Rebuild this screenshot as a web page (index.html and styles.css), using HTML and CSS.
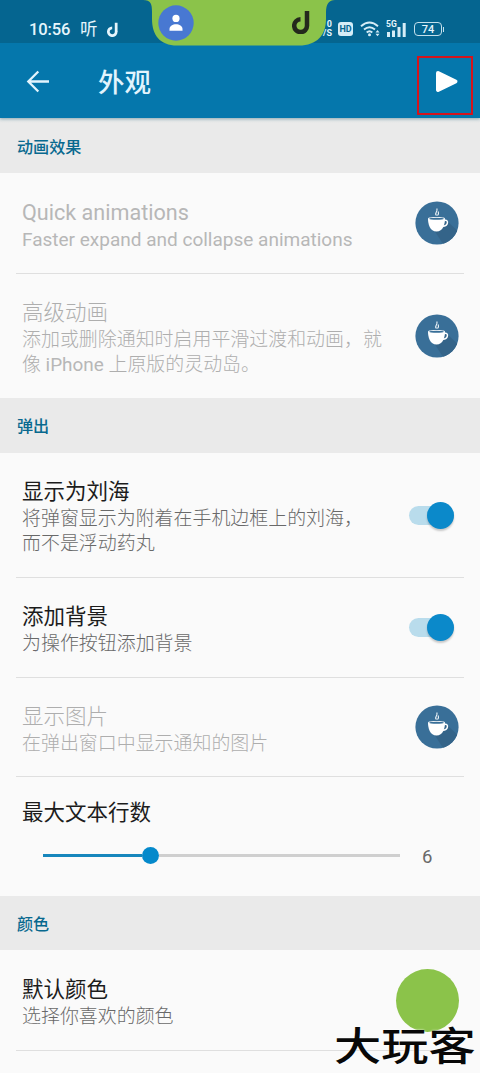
FILE: index.html
```html
<!DOCTYPE html>
<html lang="zh-CN">
<head>
<meta charset="utf-8">
<title>外观</title>
<link rel="stylesheet" href="styles.css">
</head>
<body>
<svg class="defs" width="0" height="0">
  <defs>
    <clipPath id="disc"><circle cx="22" cy="22" r="21.6"/></clipPath>
    <symbol id="coffee" viewBox="0 0 44 44">
      <circle cx="22" cy="22" r="21.6" fill="#396f98"/>
      <path clip-path="url(#disc)" d="M31 19 46 33 44 46 30 46 19 29Z" fill="#346489"/>
      <path d="M13 17.500C13 15.500 30 15.500 30 17.500C30 23.500 28 30.500 21.500 30.500S13 23.500 13 17.500Z" fill="#fff"/>
      <ellipse cx="21.500" cy="17.700" rx="7.300" ry="1" fill="#396f98"/>
      <path d="M29.300 19.500C34 18 33.500 25.300 27.500 25.200" fill="none" stroke="#fff" stroke-width="1.500"/>
      <path d="M21.500 14.500C18.500 12 23.500 11 21.800 7.500M22.500 14.500C24.500 12.800 23.500 12 23 10.500" fill="none" stroke="#f0f6fa" stroke-width="1.100"/>
    </symbol>
    <symbol id="note" viewBox="0 0 18 24">
      <path d="M15 1V15.500A6.400 6.400 0 1 1 8.500 9.300" fill="none" stroke="currentColor" stroke-width="4.500"/>
    </symbol>
  </defs>
</svg>
<div class="screen">
  <header class="top">
    <div class="status">
      <div class="status-left">
        <span class="clock">10:56</span>
        <span class="listen">听</span>
        <svg class="note-small"><use href="#note"/></svg>
      </div>
      <div class="status-right">
        <span class="speed"><span>0</span><span>/S</span></span>
        <span class="hd">HD</span>
        <svg class="wifi" width="21" height="16" viewBox="0 0 21 16" fill="none" stroke="#d6edf7" stroke-width="1.900">
          <path d="M1 5.200Q9.500-2 18 5.200M4 8.500Q9.500 3.900 15 8.500M6.700 11.500Q9.500 9 12.300 11.500"/>
          <circle cx="9.500" cy="13.700" r="1.500" fill="#d6edf7" stroke="none"/>
          <path d="M15.500 11.400 17.500 9 19.500 11.400ZM15.500 12.800 17.500 15.200 19.500 12.800Z" fill="#d6edf7" stroke="none"/>
        </svg>
        <span class="signal">
          <span class="net">5G</span>
          <svg width="20" height="14" viewBox="0 0 20 14" fill="#d6edf7"><path d="M1 9h3v5H1ZM6 7.500h3V14H6ZM11.500 4h3v10h-3ZM16.700 0h3v14h-3Z"/></svg>
        </span>
        <span class="battery">74</span>
      </div>
    </div>
    <div class="appbar">
      <svg class="back" width="24" height="24" viewBox="0 0 24 24" fill="none" stroke="#e2f4fd" stroke-width="2.300"><path d="M23 11.500H3M12.300 1.500 2.300 11.500 12.300 21.500"/></svg>
      <h1>外观</h1>
      <div class="play"><svg width="24" height="24" viewBox="0 0 24 24"><path d="M3 3 20.500 11.500 3 20Z" fill="#fff" stroke="#fff" stroke-width="4" stroke-linejoin="round"/></svg></div>
    </div>
    <div class="island">
      <svg class="island-shape" width="192" height="46" viewBox="0 0 192 46"><path d="M0 0C8 0 9 4 9 12V19C9 35 17 45.500 34 45.500H156C174 45.500 183 35 183 19V12C183 4 186 0 192 0Z" fill="#8bc34a"/></svg>
      <svg class="avatar" width="36" height="36" viewBox="0 0 36 36"><circle cx="18" cy="18" r="17.700" fill="#4878d2"/><circle cx="18" cy="13.400" r="3.600" fill="#fff"/><path d="M11.500 25.700V24C11.500 17.500 24.500 17.500 24.500 24V25.700Z" fill="#fff"/></svg>
      <svg class="note-big"><use href="#note"/></svg>
    </div>
  </header>

  <h2 class="section first">动画效果</h2>
  <div class="row divided tall">
    <div class="text off"><div class="title latin">Quick animations</div><div class="sub latin">Faster expand and collapse animations</div></div>
    <svg class="cup"><use href="#coffee"/></svg>
  </div>
  <div class="row two-line">
    <div class="text off"><div class="title">高级动画</div><div class="sub">添加或删除通知时启用平滑过渡和动画，就<br>像 <span class="latin">iPhone</span> 上原版的灵动岛。</div></div>
    <svg class="cup"><use href="#coffee"/></svg>
  </div>

  <h2 class="section">弹出</h2>
  <div class="row divided two-line notch">
    <div class="text"><div class="title">显示为刘海</div><div class="sub">将弹窗显示为附着在手机边框上的刘海，<br>而不是浮动药丸</div></div>
    <div class="switch"><div class="thumb"></div></div>
  </div>
  <div class="row divided">
    <div class="text"><div class="title">添加背景</div><div class="sub">为操作按钮添加背景</div></div>
    <div class="switch"><div class="thumb"></div></div>
  </div>
  <div class="row divided short">
    <div class="text off"><div class="title">显示图片</div><div class="sub">在弹出窗口中显示通知的图片</div></div>
    <svg class="cup"><use href="#coffee"/></svg>
  </div>
  <div class="lines">
    <div class="title">最大文本行数</div>
    <div class="slider">
      <div class="filled"></div><div class="knob"></div><div class="rest"></div>
      <span class="value">6</span>
    </div>
  </div>

  <h2 class="section colors">颜色</h2>
  <div class="row divided tall">
    <div class="text low"><div class="title">默认颜色</div><div class="sub">选择你喜欢的颜色</div></div>
    <div class="swatch"></div>
  </div>
  <div class="watermark">大玩客</div>
</div>
</body>
</html>
```
FILE: styles.css
```css
* { box-sizing: border-box; }
body { margin: 0; background: #fafafa; }
svg { display: block; flex: none; }
.defs { position: absolute; }
.screen {
  position: relative;
  width: 480px;
  height: 1073px;
  overflow: hidden;
  background: #fafafa;
  font-family: Roboto, "Noto Sans CJK SC", sans-serif;
  color: #1c1c1c;
}
.top { position: relative; height: 118px; background: #0577ac; box-shadow: 0 1px 3px rgba(0, 60, 90, .35); }
.status { display: flex; justify-content: space-between; height: 43px; padding: 16px 35px 0 29px; background: #056590; color: #e6f5fc; }
.status-left { display: flex; align-items: center; height: 26px; }
.clock { width: 51px; font-size: 16.500px; font-weight: 500; letter-spacing: -.1px; }
.listen { width: 27px; font-size: 17.500px; font-weight: 400; line-height: 26px; }
.note-small { width: 11px; height: 15px; }
.status-right { display: flex; align-items: center; height: 26px; }
.speed { display: flex; flex-direction: column; align-items: flex-end; margin-right: 6px; font-size: 9px; font-weight: 700; line-height: 9px; }
.hd { width: 15px; height: 14px; margin-right: 7px; border-radius: 3px; background: #d6edf7; color: #056590; font-size: 9px; font-weight: 700; line-height: 14px; text-align: center; }
.wifi { margin-right: 5px; }
.signal { position: relative; display: flex; width: 22px; height: 16px; align-items: flex-end; margin-right: 6px; }
.net { position: absolute; left: 0; top: -1px; font-size: 8.500px; line-height: 9px; font-weight: 700; }
.battery { position: relative; width: 28px; height: 14px; margin-right: 3px; border: 1px solid #c4e0ec; border-radius: 4px; font-size: 11px; font-weight: 500; line-height: 13px; text-align: center; }
.battery::after { content: ""; position: absolute; right: -3px; top: 4px; width: 1px; height: 5px; background: #c4e0ec; }
.appbar { display: flex; height: 75px; padding-left: 26px; }
.back { margin-top: 27px; }
h1 { width: 320px; margin: 0 0 0 48px; color: #e2f4fd; font-size: 26.500px; font-weight: 500; line-height: 79px; }
.play { display: flex; width: 56px; height: 59px; margin: 13px 0 0 -1px; padding: 12px 0 0 16px; border: 2px solid #d5141c; }
.island { position: absolute; left: 143px; top: 0; width: 192px; height: 46px; }
.avatar { position: absolute; left: 15px; top: 5px; }
.note-big { position: absolute; left: 149px; top: 10px; width: 18px; height: 24px; color: #24291c; }
.section { height: 55px; margin: 0; padding-left: 17px; background: #eaeaea; color: #08698f; font-size: 16.100px; font-weight: 500; line-height: 58px; }
.section.first { line-height: 60px; background: linear-gradient(#dce4e5, #eaeaea 5px); }
.section.colors { height: 54px; }
.row { position: relative; display: flex; justify-content: space-between; align-items: center; height: 100px; padding: 0 21px 0 22px; }
.row.tall { height: 101px; }
.row.short { height: 99px; }
.row.two-line { height: 124px; }
.row.notch { height: 125px; }
.divided::after { content: ""; position: absolute; left: 16px; right: 16px; bottom: 0; height: 1px; background: #dfdfdf; }
.text { align-self: flex-start; padding-top: 25px; white-space: nowrap; }
.text.low { padding-top: 26px; }
.title { height: 28px; font-size: 21.500px; font-weight: 400; line-height: 28px; }
.title.latin { line-height: 30px; font-size: 21.600px; }
.sub { color: #696969; font-size: 18.950px; font-weight: 300; line-height: 25px; }
.sub.latin { font-size: 19px; padding-top: 1px; }
.sub.latin, .sub .latin { font-weight: 400; }
.off .title, .off .sub { color: #aeaeae; font-weight: 300; }
.off .title.latin, .off .sub.latin, .off .latin { color: #b7b7b7; font-weight: 400; }
.cup { width: 44px; height: 44px; margin-bottom: 1px; }
.switch { display: flex; align-items: center; justify-content: flex-end; width: 45px; height: 19px; margin: 0 5px 1px 0; border-radius: 10px; background: #b9dcec; }
.thumb { width: 27px; height: 27px; flex: none; border-radius: 50%; background: #0b89ca; box-shadow: 0 2px 2px rgba(0, 0, 0, .2); }
.lines { height: 119px; padding: 22px 46px 0 22px; }
.slider { display: flex; align-items: center; height: 18px; margin: 19px 0 0 21px; }
.filled { width: 99px; height: 3px; background: #1686bc; }
.knob { width: 17px; height: 17px; border-radius: 50%; background: #0489cb; }
.rest { width: 241px; height: 3px; background: #cfcfcf; }
.value { margin-left: 22px; padding-top: 3px; color: #696969; font-size: 18.500px; line-height: 18px; }
.swatch { width: 63px; height: 63px; border-radius: 50%; background: #8bc34a; }
.watermark { position: absolute; left: 334px; top: 1014px; color: #080808; font: 500 39px/58px "Noto Sans CJK SC", sans-serif; transform: scaleX(1.21); transform-origin: 0 50%; white-space: nowrap; text-shadow: 0 0 2px #fff; }
```
